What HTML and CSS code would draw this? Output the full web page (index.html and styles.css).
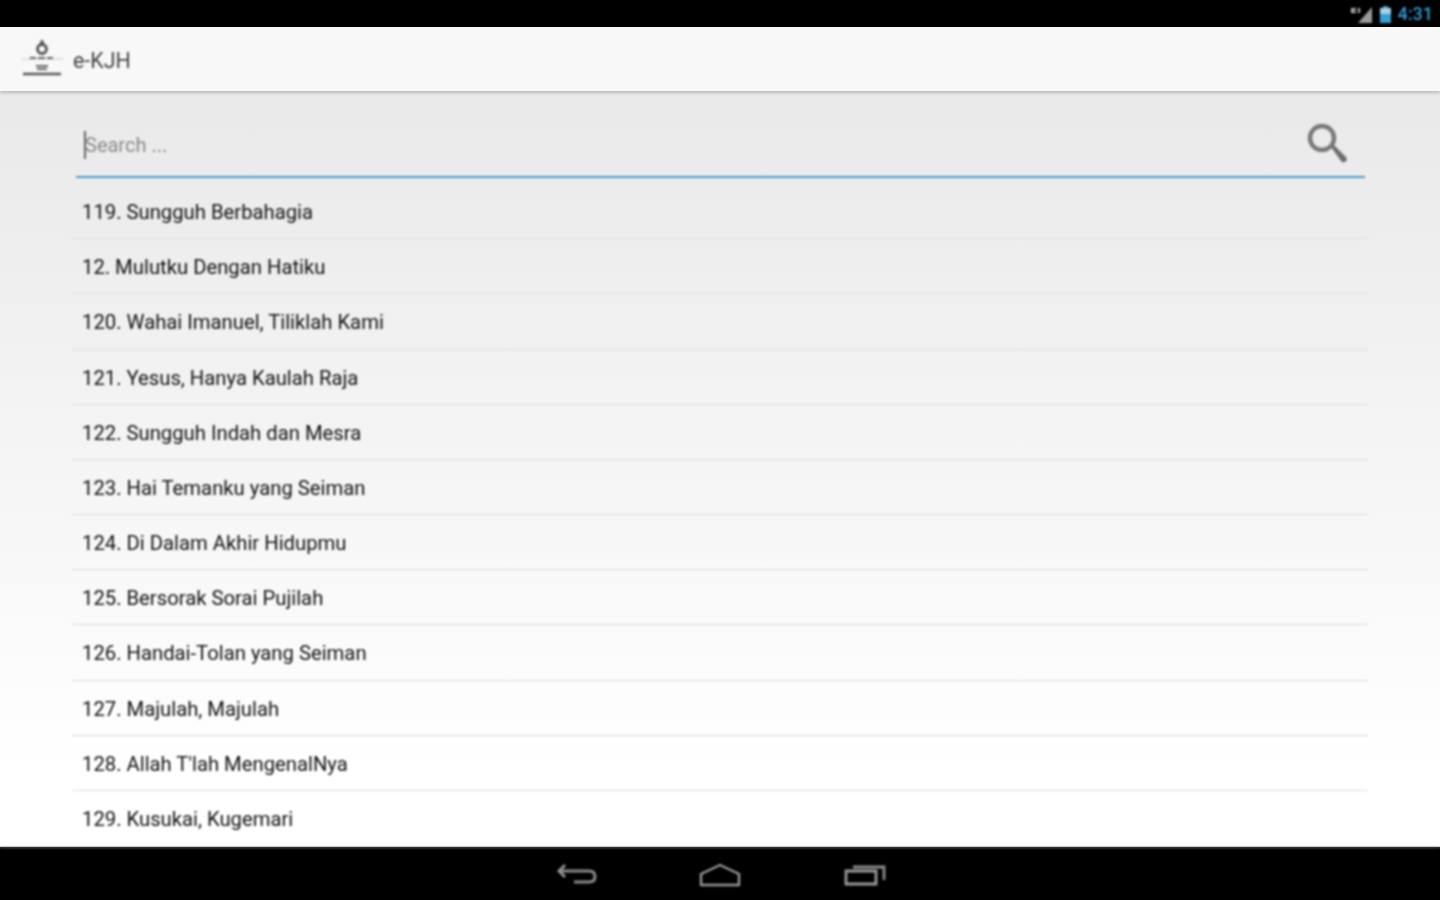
FILE: index.html
```html
<!DOCTYPE html>
<html lang="id">
<head>
<meta charset="utf-8">
<title>e-KJH</title>
<link rel="stylesheet" href="styles.css">
</head>
<body>
<div class="screen">
  <header class="status">
    <svg class="ic-signal" width="24" height="18" viewBox="0 0 24 18"><path d="M22 2V18H8Z" fill="#9a9a9a"/><path d="M1 3h5v2H3v1h3v2H1zM8 3h2v5H8z" fill="#bbb"/></svg>
    <svg class="ic-batt" width="13" height="18" viewBox="0 0 13 18"><path d="M4 1h5v2h3v15H1V3h3z" fill="#33a0d6"/><path d="M1 3h11v6H1z" fill="#a8cfe2"/></svg>
    <span class="clock">4:31</span>
  </header>
  <div class="appbar">
    <svg class="logo" width="44" height="44" viewBox="0 0 44 44">
      <path d="M21 3h2l2 6h-6z" fill="#555"/>
      <circle cx="22" cy="12" r="4.500" fill="none" stroke="#555" stroke-width="2.800"/>
      <path d="M1 22H43" stroke="#ccc"/>
      <path d="M10 21h6M18 21h7M27 21h6" stroke="#666" stroke-width="2"/>
      <path d="M16 29h12M17 32h10" stroke="#666" stroke-width="1.800"/>
      <path d="M3 37H41" stroke="#555" stroke-width="2.600"/>
    </svg>
    <span class="app-title">e-KJH</span>
  </div>
  <main class="content">
    <div class="search">
      <span class="caret"></span>
      <span class="placeholder">Search ...</span>
      <svg class="ic-search" width="44" height="44" viewBox="0 0 44 44"><circle cx="18" cy="17" r="12" fill="none" stroke="#7a7a7a" stroke-width="4.500"/><path d="M27 26l3-2 12 12a2.500 2.500 0 0 1-5 4z" fill="#6e6e6e"/></svg>
    </div>
    <ul class="list">
      <li>119. Sungguh Berbahagia</li>
      <li>12. Mulutku Dengan Hatiku</li>
      <li>120. Wahai Imanuel, Tiliklah Kami</li>
      <li>121. Yesus, Hanya Kaulah Raja</li>
      <li>122. Sungguh Indah dan Mesra</li>
      <li>123. Hai Temanku yang Seiman</li>
      <li>124. Di Dalam Akhir Hidupmu</li>
      <li>125. Bersorak Sorai Pujilah</li>
      <li>126. Handai-Tolan yang Seiman</li>
      <li>127. Majulah, Majulah</li>
      <li>128. Allah T'lah MengenalNya</li>
      <li>129. Kusukai, Kugemari</li>
    </ul>
  </main>
  <footer class="nav">
    <svg class="back" width="44" height="28" viewBox="0 0 44 28"><path d="M9 3L3 9l6 6" fill="none" stroke="#999" stroke-width="2.800"/><path d="M4 9H33q6 0 6 5.500t-6 5.500H18" fill="none" stroke="#8a8a8a" stroke-width="3"/></svg>
    <svg width="44" height="28" viewBox="0 0 44 28"><path d="M3 23V12L22 3 41 12V23Z" fill="none" stroke="#999" stroke-width="2.400" stroke-linejoin="round"/></svg>
    <svg width="44" height="28" viewBox="0 0 44 28"><path d="M3 9H33V22H3Z" fill="none" stroke="#999" stroke-width="2.800"/><path d="M10 5H41V18" fill="none" stroke="#8a8a8a" stroke-width="2.800"/></svg>
  </footer>
</div>
</body>
</html>
```
FILE: styles.css
```css
html, body { margin: 0; padding: 0; height: 100%; background: #000; }
.screen { width: 1440px; height: 900px; display: flex; flex-direction: column; overflow: hidden; font-family: Roboto, "Liberation Sans", sans-serif; }
.status { height: 27px; flex: none; background: #000; display: flex; align-items: center; justify-content: flex-end; gap: 6px; padding-right: 7px; filter: blur(0.8px); }
.clock { color: #2f9fd4; font-size: 18px; font-weight: 500; line-height: 27px; }
.ic-signal { margin-right: -1px; }
.appbar { height: 64px; flex: none; background: #f8f8f8; display: flex; align-items: center; gap: 9px; padding-left: 20px; position: relative; z-index: 1; box-shadow: 0 2px 3px rgba(0,0,0,.2); }
.logo { filter: blur(0.8px); }
.app-title { font-size: 21.400px; color: #444; padding-top: 3px; filter: blur(0.8px); }
.content { flex: 1; min-height: 0; overflow: hidden; background: linear-gradient(#e9e9e9, #fff 90%); padding: 0 72px; display: flex; flex-direction: column; }
.search { flex: none; height: 87px; margin: 0 3px 0 4px; box-sizing: border-box; border-bottom: 2px solid #4a9bd0; display: flex; align-items: center; padding: 23px 10px 0 8px; filter: blur(0.8px); }
.caret { width: 2px; height: 28px; background: #666; flex: none; }
.placeholder { flex: 1; font-size: 20px; color: #8a8a8a; margin-left: -1px; }
.ic-search { flex: none; margin-top: -5px; margin-right: 7px; }
.list { list-style: none; margin: 6px 0 0; padding: 0; filter: blur(0.8px); }
.list li { height: 55.180px; box-sizing: border-box; line-height: 57px; padding-left: 10px; font-size: 20.250px; color: #111; border-bottom: 1px solid #ddd; white-space: nowrap; }
.list li:last-child { border-bottom: none; }
.nav { height: 53px; flex: none; background: #000; border-top: 1px solid #888; box-sizing: border-box; display: flex; justify-content: center; align-items: center; gap: 101px; padding-top: 3px; filter: blur(0.8px); }
.back { margin-left: 3px; margin-right: -3px; }
```
